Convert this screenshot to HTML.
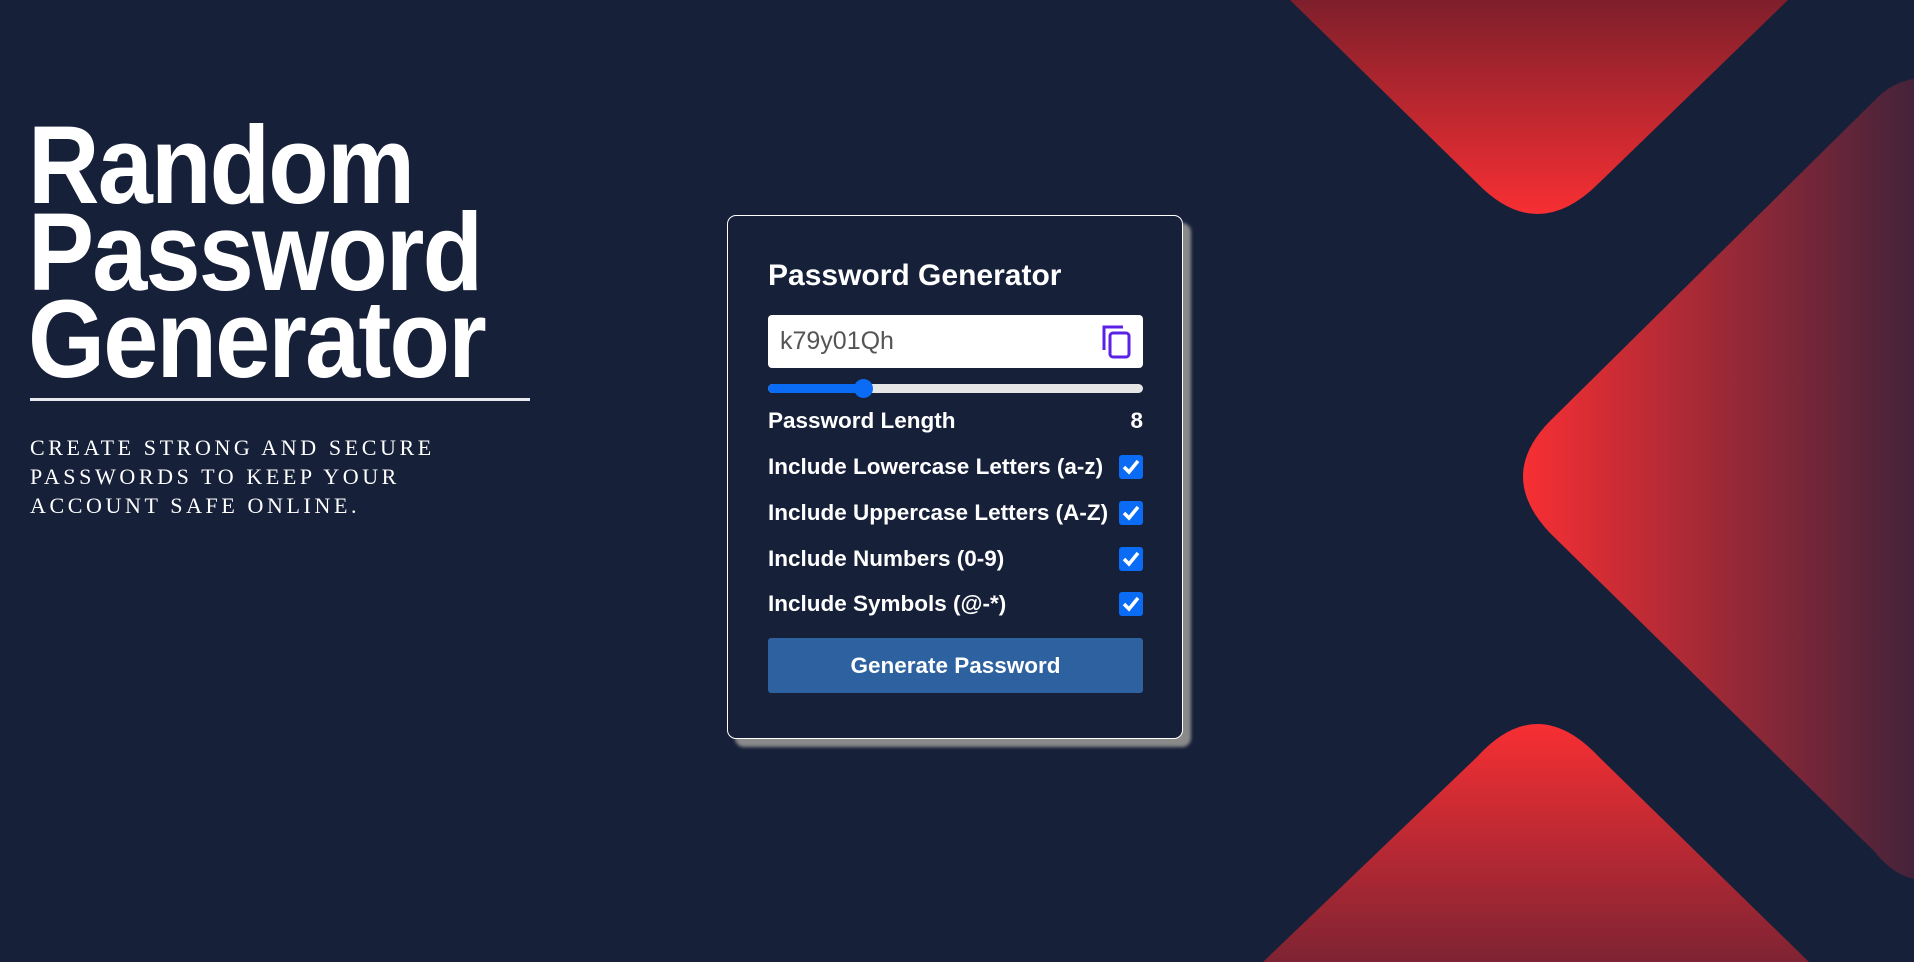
<!DOCTYPE html>
<html><head><meta charset="utf-8"><style>
*{margin:0;padding:0;box-sizing:border-box}
html,body{width:1914px;height:962px;overflow:hidden;background:#162039;font-family:"Liberation Sans",sans-serif;color:#fff}
.bg{position:absolute;left:0;top:0}
.h1{position:absolute;left:28px;top:122px;font-weight:bold;font-size:110px;line-height:87px;letter-spacing:-2px;transform:scaleX(0.9);transform-origin:left top;white-space:nowrap}
.rule{position:absolute;left:30px;top:398px;width:500px;height:3px;background:#e8e8ee}
.sub{position:absolute;left:30px;top:433px;font-family:"Liberation Serif",serif;font-size:22px;line-height:29px;letter-spacing:3.6px}
.card{position:absolute;left:727px;top:215px;width:456px;height:524px;border:1px solid #fff;border-radius:9px;background:#162039;box-shadow:8px 8px 3px #8a8a8a}
.title{position:absolute;left:40px;top:43px;font-size:30px;font-weight:bold}
.inp{position:absolute;left:40px;top:99px;width:375px;height:53px;background:#fff;border-radius:4px;color:#555;font-size:25px;padding-left:12px;line-height:53px}
.track{position:absolute;left:40px;top:168px;width:375px;height:9px;border-radius:5px;background:#e6e6e6}
.fill{position:absolute;left:0;top:0;width:100px;height:9px;border-radius:5px;background:#0a6cf5}
.thumb{position:absolute;left:86px;top:-5px;width:19px;height:19px;border-radius:50%;background:#0a6cf5}
.row{position:absolute;left:40px;width:375px;font-size:22.5px;font-weight:bold;height:26px;line-height:26px;white-space:nowrap}
.cb{position:absolute;right:0;top:1px;width:24px;height:24px;border-radius:3px;background:#0a6cf5}
.btn{position:absolute;left:40px;top:422px;width:375px;height:55px;background:#2d61a0;border-radius:3px;text-align:center;line-height:55px;font-size:22.5px;font-weight:bold}
</style></head><body>
<svg class="bg" width="1914" height="962" viewBox="0 0 1914 962">
<defs>
<linearGradient id="gt" x1="0" y1="0" x2="0" y2="1"><stop offset="0" stop-color="#7e1f2b"/><stop offset="1" stop-color="#f72f33"/></linearGradient>
<linearGradient id="gb" x1="0" y1="1" x2="0" y2="0"><stop offset="0" stop-color="#7e2333"/><stop offset="1" stop-color="#f72f33"/></linearGradient>
<linearGradient id="gr" x1="0" y1="0" x2="1" y2="0"><stop offset="0" stop-color="#f72f33"/><stop offset="1" stop-color="#44233a"/></linearGradient>
</defs>
<path d="M1290 0 L1477 183 Q1537 245 1599 183 L1788 0 Z" fill="url(#gt)"/>
<path d="M1263 962 L1477 757 Q1537 691 1599 757 L1809 962 Z" fill="url(#gb)"/>
<path d="M1914 79 Q1892 82 1875 100 L1550 421 Q1496 476 1550 533 L1875 852 Q1892 874 1914 879 Z" fill="url(#gr)"/>
</svg>
<div class="h1">Random<br>Password<br>Generator</div>
<div class="rule"></div>
<div class="sub">CREATE STRONG AND SECURE<br>PASSWORDS TO KEEP YOUR<br>ACCOUNT SAFE ONLINE.</div>
<div class="card">
<div class="title">Password Generator</div>
<div class="inp">k79y01Qh
<svg style="position:absolute;left:334px;top:9px" width="30" height="36" viewBox="0 0 30 36"><path d="M2 26 V3 H21" fill="none" stroke="#5b21e6" stroke-width="3"/><rect x="8" y="9" width="19" height="24" rx="3" fill="none" stroke="#5b21e6" stroke-width="3"/></svg>
</div>
<div class="track"><div class="fill"></div><div class="thumb"></div></div>
<div class="row" style="top:192px">Password Length<span style="position:absolute;right:0">8</span></div>
<div class="row" style="top:238px">Include Lowercase Letters (a-z)<span class="cb"><svg width="24" height="24"><path d="M5 12 L10 17 L19 6" fill="none" stroke="#fff" stroke-width="3.5"/></svg></span></div>
<div class="row" style="top:284px">Include Uppercase Letters (A-Z)<span class="cb"><svg width="24" height="24"><path d="M5 12 L10 17 L19 6" fill="none" stroke="#fff" stroke-width="3.5"/></svg></span></div>
<div class="row" style="top:330px">Include Numbers (0-9)<span class="cb"><svg width="24" height="24"><path d="M5 12 L10 17 L19 6" fill="none" stroke="#fff" stroke-width="3.5"/></svg></span></div>
<div class="row" style="top:375px">Include Symbols (@-*)<span class="cb"><svg width="24" height="24"><path d="M5 12 L10 17 L19 6" fill="none" stroke="#fff" stroke-width="3.5"/></svg></span></div>
<div class="btn">Generate Password</div>
</div>
</body></html>
